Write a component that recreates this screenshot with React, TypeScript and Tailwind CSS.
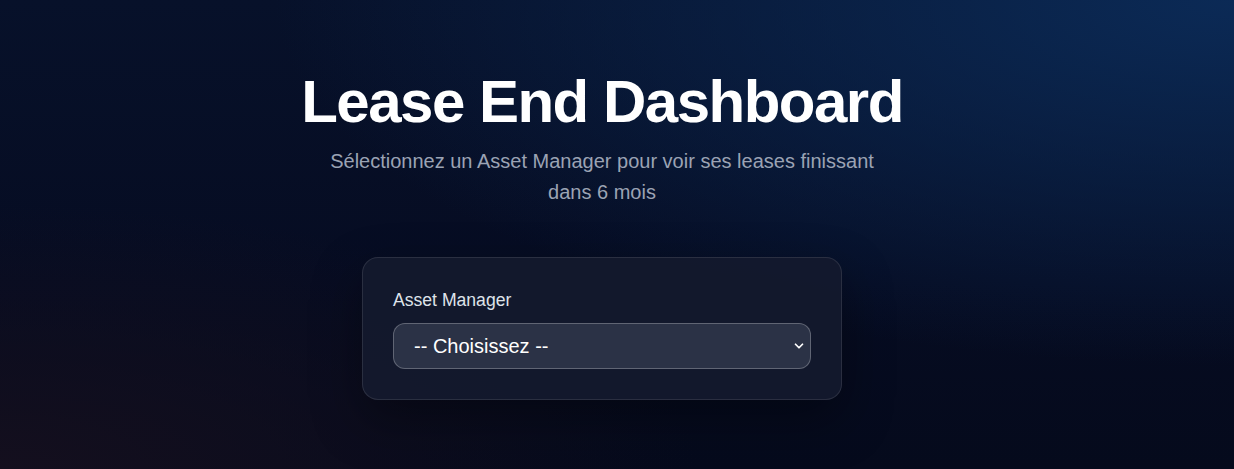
import { ChevronDown } from 'lucide-react'

export default function App() {
  const managers = ['-- Choisissez --']

  return (
    <div className="min-h-screen w-full bg-[#060d22] bg-[radial-gradient(ellipse_at_100%_0%,#0b2a56_0%,rgba(11,42,86,0.55)_25%,rgba(6,13,34,0)_55%),radial-gradient(ellipse_at_0%_100%,#140f1e_0%,rgba(13,15,30,0)_40%),linear-gradient(180deg,#07112a_0%,#060c22_60%,#050a1c_100%)] font-['Liberation_Sans',Arial,sans-serif]">
      <div className="flex flex-col items-center pt-[72px] pr-[30px]">
        <h1 className="text-6xl font-bold leading-none tracking-tight text-white">
          Lease End Dashboard
        </h1>
        <p className="mt-[14px] max-w-xl text-center text-xl leading-[31px] text-[#9ba3b4]">
          Sélectionnez un Asset Manager pour voir ses leases finissant dans 6 mois
        </p>

        <div className="mt-[49px] w-[480px] rounded-2xl border border-white/10 bg-[#141a2e]/90 px-[30px] pt-[31px] pb-[30px] shadow-[0_20px_50px_rgba(0,0,0,0.35)]">
          <label className="mb-3 block text-[17.6px] leading-[22px] text-[#dfe3ea]">
            Asset Manager
          </label>
          <div className="relative">
            <select className="h-[46px] w-full appearance-none rounded-xl border border-white/25 bg-[#2b3246] pl-5 pr-10 text-xl text-white outline-none">
              {managers.map((m) => (
                <option key={m}>{m}</option>
              ))}
            </select>
            <ChevronDown
              className="pointer-events-none absolute right-[5px] top-1/2 h-[14px] w-[14px] -translate-y-1/2 text-white"
              strokeWidth={3}
            />
          </div>
        </div>
      </div>
    </div>
  )
}
